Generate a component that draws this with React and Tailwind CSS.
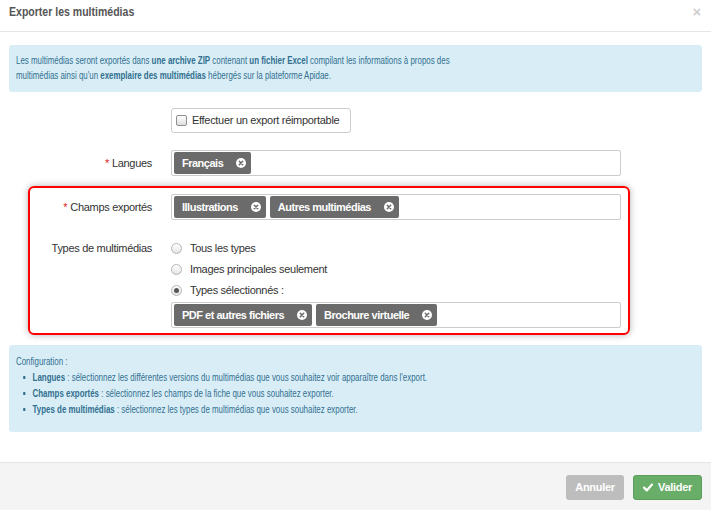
import React from "react";

const TagClose = () => (
  <svg width="10" height="10" viewBox="0 0 10 10" className="ml-[13px] shrink-0">
    <circle cx="5" cy="5" r="5" fill="#ffffff" />
    <path d="M3.3 3.3 L6.7 6.7 M6.7 3.3 L3.3 6.7" stroke="#6b6b6b" strokeWidth="1.5" strokeLinecap="round" />
  </svg>
);

function Tag({ children }) {
  return (
    <span className="inline-flex items-center h-[22px] rounded-[2px] bg-[#6b6b6b] pl-[8px] pr-[5px] text-white font-bold text-[11px] tracking-[-0.5px] whitespace-nowrap">
      {children}
      <TagClose />
    </span>
  );
}

function TagInput({ tags }) {
  return (
    <div className="w-[450px] h-[26px] border border-[#cccccc] rounded-[2px] bg-white flex items-center gap-[4px] pl-[2px]">
      {tags.map((t) => (
        <Tag key={t}>{t}</Tag>
      ))}
    </div>
  );
}

function Radio({ checked, label }) {
  return (
    <div className="h-[21px] flex items-center">
      <span className="w-[11px] h-[11px] rounded-full border border-[#b5b5b5] bg-gradient-to-b from-white to-[#e4e4e4] flex items-center justify-center">
        {checked && <span className="w-[5px] h-[5px] rounded-full bg-[#555555]" />}
      </span>
      <span className="ml-[8px]">{label}</span>
    </div>
  );
}

const Star = () => <span className="text-[#e02020] mr-[3px]">*</span>;

const Bullet = () => <span className="w-[3px] h-[3px] bg-[#31708f] mr-[10px] shrink-0" />;

export default function App() {
  return (
    <div className="w-[711px] h-[510px] bg-white flex flex-col overflow-hidden font-['Liberation_Sans',Arial,sans-serif] text-[11px] text-[#333333] tracking-[-0.3px]">
      {/* header */}
      <div className="h-[32px] shrink-0 border-b border-[#e5e5e5] flex items-start justify-between pl-[9px] pr-[10px] pt-[4px]">
        <h4 className="inline-block origin-left scale-x-[0.81] text-[13px] leading-[16px] font-bold text-[#555555] tracking-[0px] whitespace-nowrap">
          Exporter les multimédias
        </h4>
        <span className="text-[15px] leading-[16px] font-bold text-[#cfcfcf]">×</span>
      </div>

      {/* body */}
      <div className="flex-1 px-[9px] pt-[13px]">
        <div className="h-[47px] rounded-[3px] bg-[#d9edf7] text-[#31708f] px-[7px] pt-[8px] text-[11px] leading-[15px] tracking-[0px] overflow-hidden">
          <div className="w-[940px] origin-left scale-x-[0.72]">
            Les multimédias seront exportés dans <b>une archive ZIP</b> contenant <b>un fichier Excel</b> compilant les informations à propos des
            <br />
            multimédias ainsi qu'un <b>exemplaire des multimédias</b> hébergés sur la plateforme Apidae.
          </div>
        </div>

        {/* reimportable option */}
        <div className="mt-[16px] pl-[162px]">
          <label className="inline-flex items-center h-[25px] w-[180px] border border-[#cccccc] rounded-[3px] pl-[4px]">
            <span className="w-[11px] h-[11px] rounded-[2px] border border-[#8f8f8f] bg-gradient-to-b from-white to-[#dedede]" />
            <span className="ml-[5px]">Effectuer un export réimportable</span>
          </label>
        </div>

        {/* languages */}
        <div className="mt-[17px] flex items-center">
          <div className="w-[143px] text-right">
            <Star />Langues
          </div>
          <div className="ml-[19px]">
            <TagInput tags={["Français"]} />
          </div>
        </div>

        {/* highlighted fields */}
        <div className="mt-[10px] ml-[19px] w-[602px] h-[149px] border-2 border-[#ff0000] rounded-[6px] shadow-[0_0_7px_rgba(0,0,0,0.3)] pt-[6px]">
          <div className="flex items-center">
            <div className="w-[122px] text-right">
              <Star />Champs exportés
            </div>
            <div className="ml-[19px]">
              <TagInput tags={["Illustrations", "Autres multimédias"]} />
            </div>
          </div>
          <div className="mt-[18px] flex items-start">
            <div className="w-[122px] text-right h-[21px] leading-[21px]">Types de multimédias</div>
            <div className="ml-[19px]">
              <Radio label="Tous les types" />
              <Radio label="Images principales seulement" />
              <Radio checked label="Types sélectionnés :" />
              <div className="mt-[1px]">
                <TagInput tags={["PDF et autres fichiers", "Brochure virtuelle"]} />
              </div>
            </div>
          </div>
        </div>

        {/* help */}
        <div className="mt-[10px] h-[87px] rounded-[3px] bg-[#d9edf7] text-[#31708f] pl-[7px] pt-[8px] text-[11px] leading-[16px] tracking-[0px] overflow-hidden">
          <div className="w-[940px] origin-left scale-x-[0.72]">
            <div>Configuration :</div>
            <ul className="pl-[10px]">
              <li className="flex items-center">
                <Bullet />
                <span><b>Langues</b> : sélectionnez les différentes versions du multimédias que vous souhaitez voir apparaître dans l'export.</span>
              </li>
              <li className="flex items-center">
                <Bullet />
                <span><b>Champs exportés</b> : sélectionnez les champs de la fiche que vous souhaitez exporter.</span>
              </li>
              <li className="flex items-center">
                <Bullet />
                <span><b>Types de multimédias</b> : sélectionnez les types de multimédias que vous souhaitez exporter.</span>
              </li>
            </ul>
          </div>
        </div>
      </div>

      {/* footer */}
      <div className="h-[48px] shrink-0 border-t border-[#e5e5e5] bg-[#f4f4f4] flex items-start justify-end gap-[9px] pt-[12px] pr-[9px]">
        <button className="h-[25px] w-[58px] rounded-[3px] bg-[#bdbdbd] text-white font-bold text-[11px]">Annuler</button>
        <button className="h-[25px] w-[69px] rounded-[3px] bg-[#68ad68] border border-[#5a9e5a] text-white font-bold text-[11px] flex items-center justify-center gap-[5px]">
          <svg width="10" height="9" viewBox="0 0 10 9">
            <path d="M1 4.6 L3.8 7.4 L9 1.6" fill="none" stroke="#ffffff" strokeWidth="2.2" strokeLinecap="round" strokeLinejoin="round" />
          </svg>
          Valider
        </button>
      </div>
    </div>
  );
}
